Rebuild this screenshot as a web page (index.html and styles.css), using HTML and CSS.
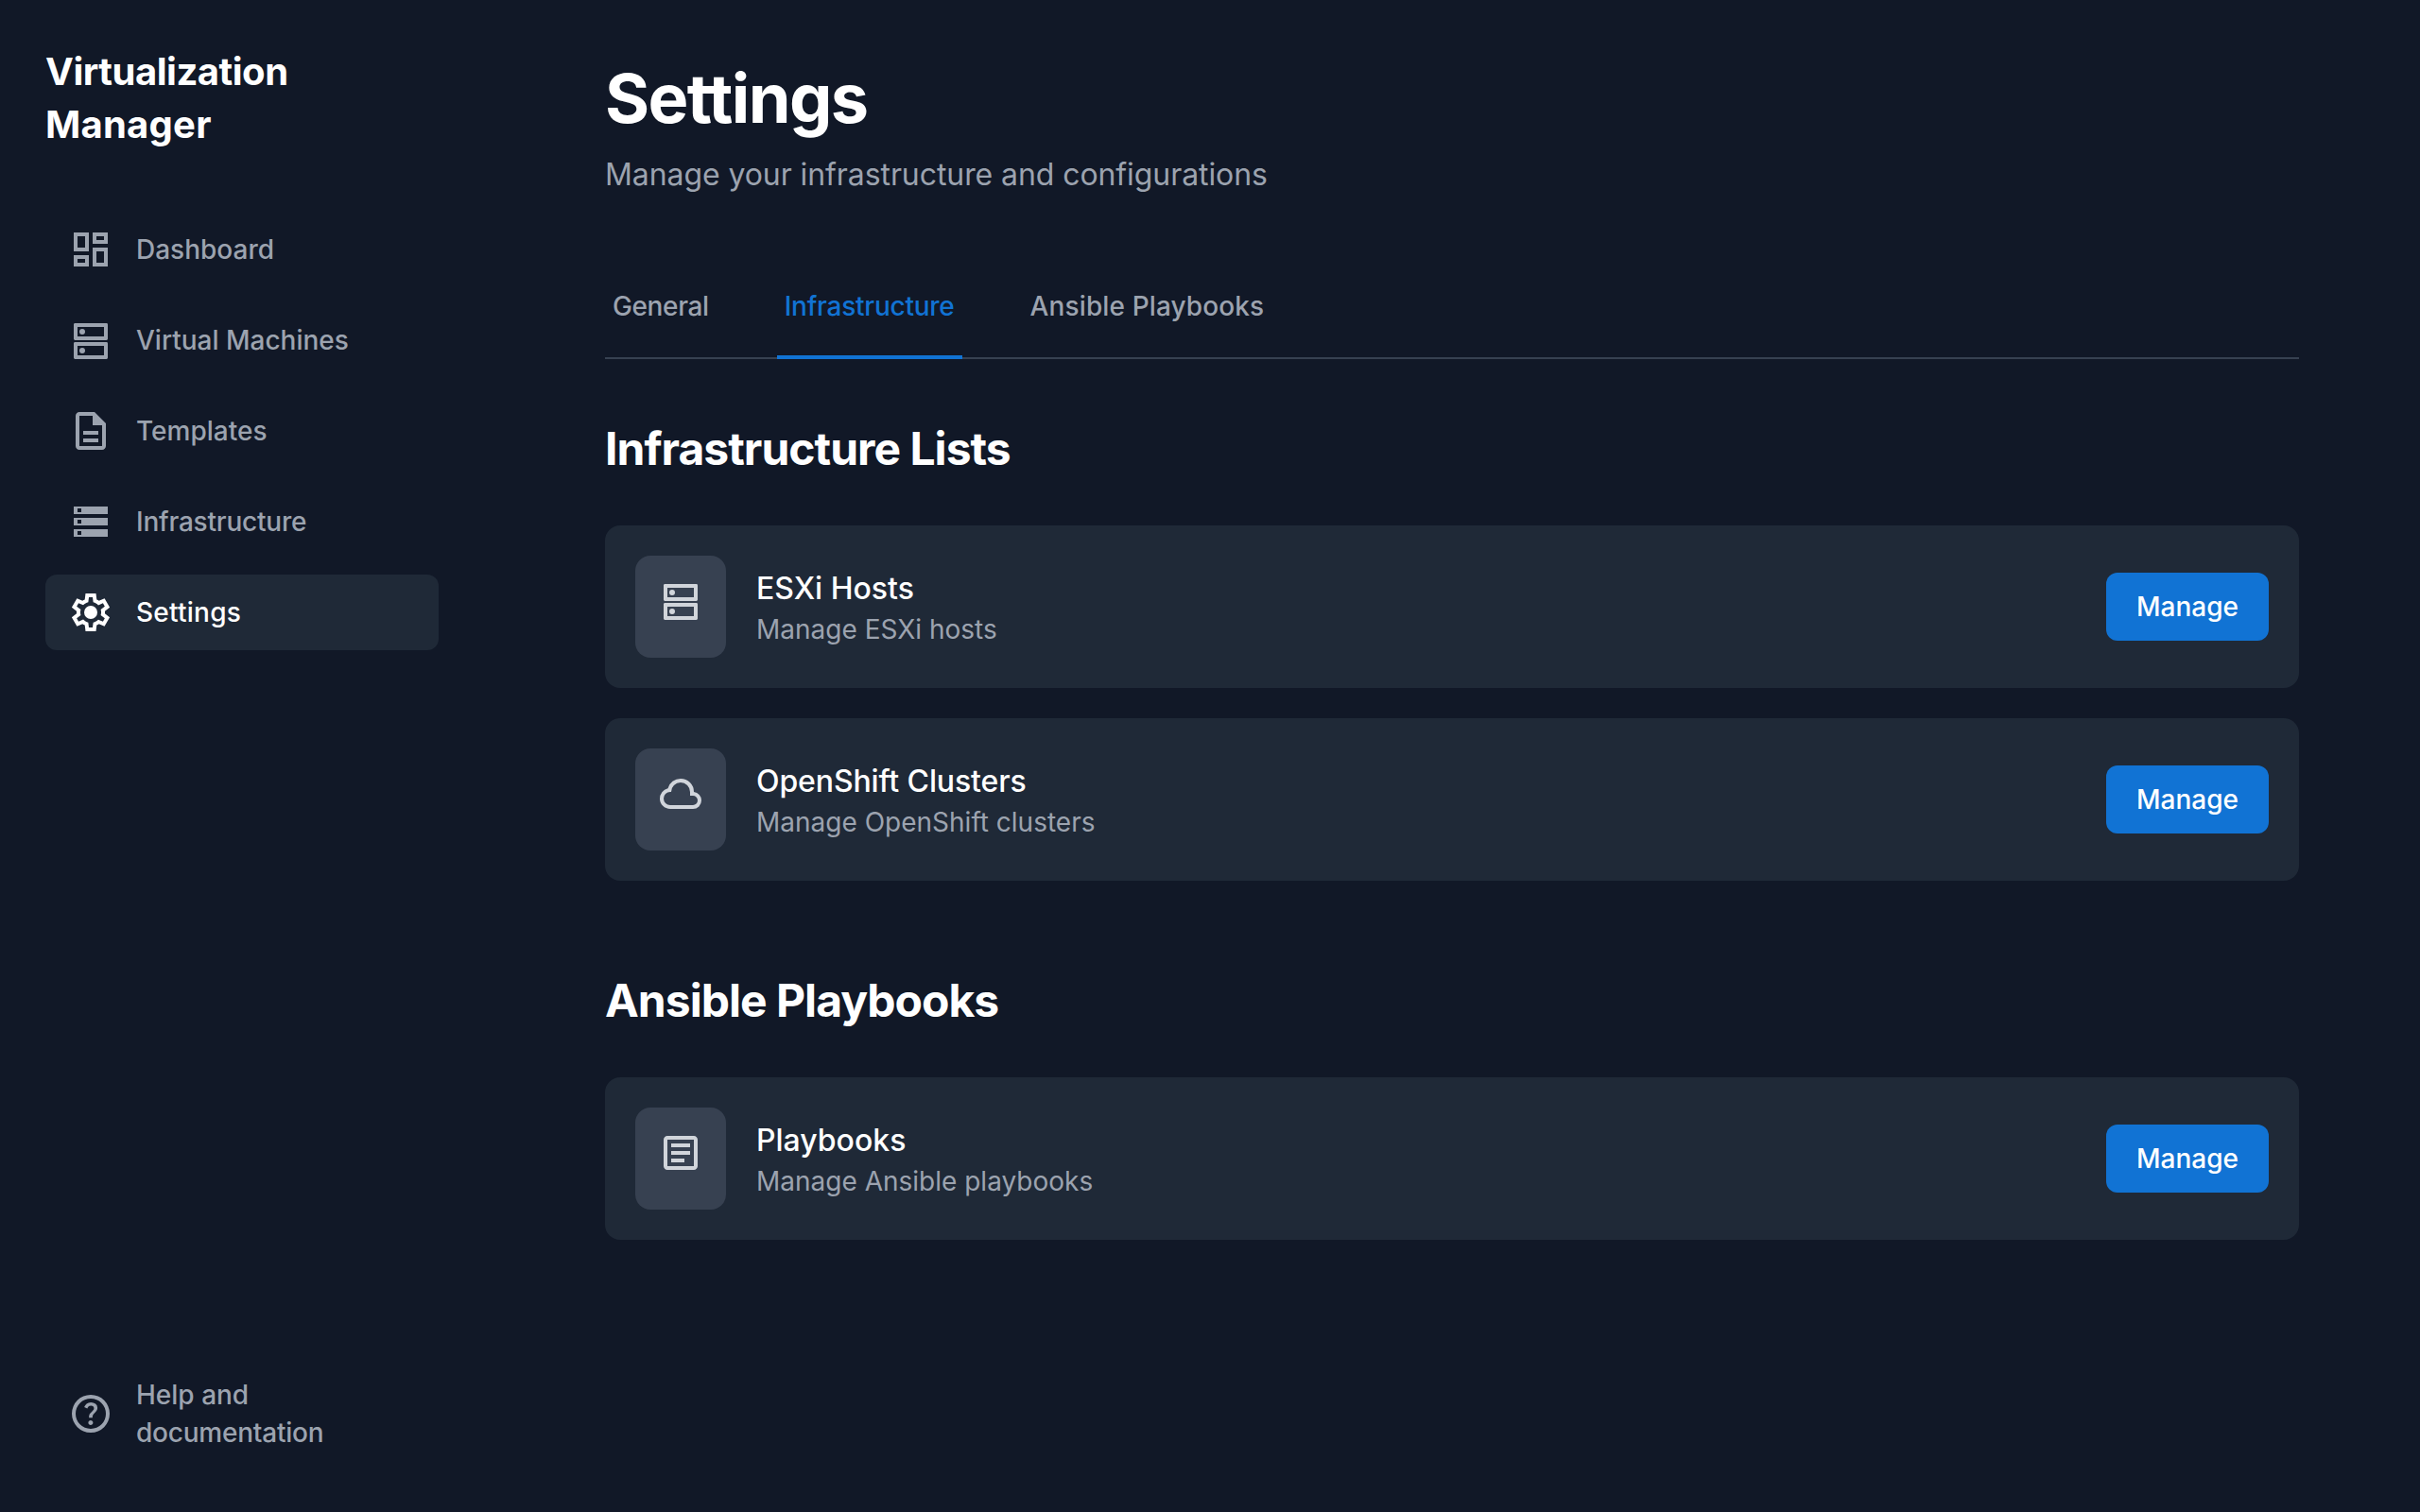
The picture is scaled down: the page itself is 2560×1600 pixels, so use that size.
FILE: index.html
```html
<!DOCTYPE html>
<html lang="en">
<head>
<meta charset="utf-8">
<title>Virtualization Manager</title>
<link rel="stylesheet" href="styles.css">
</head>
<body>
<div class="app">
  <aside class="sidebar">
    <div class="brand"><span class="brand-first">Virtualization</span> <span class="track-wide">Manager</span></div>
    <nav class="nav">
      <a class="nav-item"><svg class="icon" viewBox="0 0 24 24"><path d="M19 5v2h-4V5h4M9 5v6H5V5h4m10 8v6h-4v-6h4M9 17v2H5v-2h4M21 3h-8v6h8V3zM11 3H3v10h8V3zm10 8h-8v10h8V11zm-10 4H3v6h8v-6z"/></svg><span>Dashboard</span></a>
      <a class="nav-item"><svg class="icon" viewBox="0 0 24 24"><path fill-rule="evenodd" d="M3.7 3h16.6q.7 0 .7.7v7.6q0 .7-.7.7H3.7q-.7 0-.7-.7V3.7q0-.7.7-.7zM5 5v5h14V5zM3.700 13h16.600q.7 0 .7.7v7.600q0 .7-.7.7H3.700q-.7 0-.7-.7v-7.600q0-.7.7-.7zM5 15v5h14v-5z"/><circle cx="7.500" cy="7.500" r="1.500"/><circle cx="7.500" cy="17.500" r="1.500"/></svg><span>Virtual Machines</span></a>
      <a class="nav-item"><svg class="icon" viewBox="0 0 24 24"><path d="M8 16h8v2H8zm0-4h8v2H8zm6-10H6c-1.100 0-2 .9-2 2v16c0 1.100.89 2 1.990 2H18c1.100 0 2-.9 2-2V8l-6-6zm4 18H6V4h7v5h5v11z"/></svg><span>Templates</span></a>
      <a class="nav-item"><svg class="icon" viewBox="0 0 24 24"><path fill-rule="evenodd" d="M3 4h18v4H3zM5 5v2h2V5zM3 10h18v4H3zM5 11v2h2v-2zM3 16h18v4H3zM5 17v2h2v-2z"/></svg><span class="track-tight">Infrastructure</span></a>
      <a class="nav-item active"><svg class="icon" viewBox="0 0 24 24"><path d="M9.250 22l-.4-3.200q-.325-.125-.612-.3-.288-.175-.563-.375L4.700 19.375l-2.750-4.750 2.575-1.950Q4.500 12.500 4.500 12.338v-.675q0-.163.025-.338L1.950 9.375l2.750-4.750 2.975 1.250q.275-.2.575-.375.3-.175.6-.3l.4-3.200h5.500l.4 3.200q.325.125.613.3.287.175.562.375l2.975-1.250 2.750 4.750-2.575 1.950q.025.175.025.338v.675q0 .162-.05.337l2.575 1.950-2.750 4.750-2.950-1.250q-.275.2-.575.375-.3.175-.6.3l-.4 3.200zM11 20h1.975l.35-2.650q.775-.2 1.438-.588.662-.387 1.212-.937l2.475 1.025.975-1.700-2.150-1.625q.125-.35.175-.737.050-.388.050-.788t-.050-.787q-.050-.388-.175-.738l2.150-1.625-.975-1.700-2.475 1.050q-.55-.575-1.212-.963-.663-.387-1.438-.587L13 4h-1.975l-.35 2.650q-.775.200-1.437.587-.663.388-1.213.938L5.550 7.150l-.975 1.700 2.150 1.600q-.125.375-.175.750-.050.375-.050.800 0 .400.050.775t.175.750l-2.150 1.625.975 1.700 2.475-1.050q.55.575 1.213.963.662.387 1.437.587z"/><circle cx="12" cy="12" r="3.500"/></svg><span class="track-wide">Settings</span></a>
    </nav>
    <a class="nav-item help"><svg class="icon" viewBox="0 0 24 24"><path d="M11.950 18q.525 0 .888-.363.362-.362.362-.887t-.362-.887q-.363-.363-.888-.363t-.887.363q-.363.362-.363.887t.363.887q.362.363.887.363zm-.9-3.850h1.850q0-.825.188-1.300.187-.475 1.062-1.300.65-.650 1.025-1.238.375-.587.375-1.412 0-1.400-1.025-2.150T12.100 6q-1.425 0-2.312.750-.888.750-1.238 1.800l1.650.650q.125-.450.563-.975.437-.525 1.337-.525.800 0 1.200.438.400.437.400.962 0 .500-.3.938-.3.437-.75.812-1.100.975-1.350 1.475-.25.500-.25 1.825zM12 22q-2.075 0-3.900-.788-1.825-.787-3.175-2.137-1.350-1.350-2.137-3.175Q2 14.075 2 12t.788-3.900q.787-1.825 2.137-3.175 1.350-1.350 3.175-2.138Q9.925 2 12 2t3.900.787q1.825.788 3.175 2.138 1.350 1.350 2.138 3.175Q22 9.925 22 12t-.787 3.900q-.788 1.825-2.138 3.175-1.350 1.350-3.175 2.137Q14.075 22 12 22zm0-2q3.350 0 5.675-2.325Q20 15.350 20 12q0-3.350-2.325-5.675Q15.350 4 12 4 8.650 4 6.325 6.325 4 8.650 4 12q0 3.350 2.325 5.675Q8.650 20 12 20z"/></svg><span>Help and <span class="track-tight">documentation</span></span></a>
  </aside>

  <main class="main">
    <header>
      <h1>Settings</h1>
      <p class="subtitle">Manage your infrastructure and configurations</p>
    </header>
    <div class="tabs">
      <a class="tab tab-general">General</a>
      <a class="tab selected">Infrastructure</a>
      <a class="tab tab-ansible">Ansible Playbooks</a>
    </div>

    <section class="section">
      <h2>Infrastructure Lists</h2>
      <div class="cards">
        <div class="card">
          <div class="tile"><svg class="icon" viewBox="0 0 24 24"><path fill-rule="evenodd" d="M3.7 3h16.6q.7 0 .7.7v7.6q0 .7-.7.7H3.7q-.7 0-.7-.7V3.7q0-.7.7-.7zM5 5v5h14V5zM3.700 13h16.600q.7 0 .7.7v7.600q0 .7-.7.7H3.700q-.7 0-.7-.7v-7.600q0-.7.7-.7zM5 15v5h14v-5z"/><circle cx="7.500" cy="7.500" r="1.500"/><circle cx="7.500" cy="17.500" r="1.500"/></svg></div>
          <div class="info"><h3>ESXi Hosts</h3><p>Manage ESXi hosts</p></div>
          <button class="button">Manage</button>
        </div>
        <div class="card">
          <div class="tile"><svg class="icon" viewBox="0 0 24 24"><path d="M6.500 20q-2.275 0-3.888-1.575Q1 16.850 1 14.575q0-1.950 1.175-3.475Q3.350 9.575 5.250 9.150q.625-2.300 2.500-3.725Q9.625 4 12 4q2.925 0 4.963 2.038Q19 8.075 19 11q1.725.200 2.863 1.488Q23 13.775 23 15.500q0 1.875-1.312 3.188Q20.375 20 18.500 20zm0-2h12q1.050 0 1.775-.725Q21 16.550 21 15.500q0-1.050-.725-1.775Q19.550 13 18.500 13H17v-2q0-2.075-1.462-3.538Q14.075 6 12 6 9.925 6 8.463 7.462 7 8.925 7 11h-.5q-1.450 0-2.475 1.025Q3 13.050 3 14.500q0 1.450 1.025 2.475Q5.050 18 6.500 18z"/></svg></div>
          <div class="info"><h3 class="track-snug">OpenShift Clusters</h3><p>Manage OpenShift clusters</p></div>
          <button class="button">Manage</button>
        </div>
      </div>
    </section>

    <section class="section">
      <h2>Ansible Playbooks</h2>
      <div class="cards">
        <div class="card">
          <div class="tile"><svg class="icon" viewBox="0 0 24 24"><path d="M19 5v14H5V5h14m0-2H5c-1.100 0-2 .9-2 2v14c0 1.100.9 2 2 2h14c1.100 0 2-.9 2-2V5c0-1.100-.9-2-2-2zM14 17H7v-2h7v2zm3-4H7v-2h10v2zm0-4H7V7h10v2z"/></svg></div>
          <div class="info"><h3>Playbooks</h3><p>Manage Ansible playbooks</p></div>
          <button class="button">Manage</button>
        </div>
      </div>
    </section>
  </main>
</div>
</body>
</html>
```
FILE: styles.css
```css
* { box-sizing: border-box; margin: 0; padding: 0; }

body {
  background: #111827;
  color: #fff;
  font-family: Inter, "Liberation Sans", sans-serif;
  font-size: 32px;
  line-height: 48px;
}

.app { display: flex; min-height: 1600px; }

.sidebar {
  display: flex;
  flex-direction: column;
  width: 512px;
  flex-shrink: 0;
  padding: 48px;
}

.brand { width: 320px; font-size: 40px; line-height: 56px; font-weight: 700; margin-bottom: 64px; }
.brand-first { letter-spacing: -0.48px; }

/* Tracking adjustments */
.track-tight { letter-spacing: -0.22px; }
.track-snug { letter-spacing: -0.12px; }
.track-wide { letter-spacing: 0.24px; }

.nav { display: flex; flex-direction: column; gap: 16px; }

.nav-item {
  display: flex;
  align-items: center;
  gap: 24px;
  padding: 16px 24px;
  border-radius: 12px;
  color: #9ca3af;
  font-size: 28px;
  line-height: 40px;
  font-weight: 500;
}

.nav-item.active { background: #1f2937; color: #fff; }

.help { margin-top: auto; }

.icon { display: block; width: 48px; height: 48px; flex-shrink: 0; fill: currentColor; }

.main { flex: 1; padding: 64px 128px; }

h1 { font-size: 72px; line-height: 80px; font-weight: 700; letter-spacing: -1.6px; }

.subtitle {
  margin-top: 16px;
  padding-top: 2px;
  line-height: 46px;
  color: #9ca3af;
  letter-spacing: -0.08px;
}

.tabs {
  display: flex;
  gap: 64px;
  margin-top: 64px;
  padding-top: 32px;
  border-bottom: 2px solid #374151;
}

.tab {
  padding: 0 8px 32px;
  margin-bottom: -2px;
  border-bottom: 4px solid transparent;
  color: #9ca3af;
  font-size: 28px;
  line-height: 40px;
  font-weight: 500;
}

.tab.selected { color: #1173d4; border-bottom-color: #1173d4; letter-spacing: -0.24px; }
.tab-general { letter-spacing: -0.38px; }
.tab-ansible { letter-spacing: 0.12px; }

.section { margin-top: 64px; }
.section + .section { margin-top: 96px; }

h2 {
  padding-bottom: 2px;
  font-size: 48px;
  line-height: 62px;
  font-weight: 700;
  letter-spacing: -0.98px;
}

.cards { display: flex; flex-direction: column; gap: 32px; margin-top: 48px; }

.card {
  display: flex;
  align-items: center;
  gap: 32px;
  padding: 32px;
  border-radius: 16px;
  background: #1f2937;
}

.tile {
  width: 96px;
  height: 108px;
  padding: 24px;
  border-radius: 16px;
  background: #374151;
  color: #d1d5db;
}

.info { flex: 1; }

h3 { padding-top: 2px; font-size: 32px; line-height: 46px; font-weight: 500; }

.info p { color: #9ca3af; font-size: 28px; line-height: 40px; }

.button {
  padding: 16px 32px;
  border: 0;
  border-radius: 12px;
  background: #1173d4;
  color: #fff;
  font: 500 28px/40px Inter, "Liberation Sans", sans-serif;
}
```
